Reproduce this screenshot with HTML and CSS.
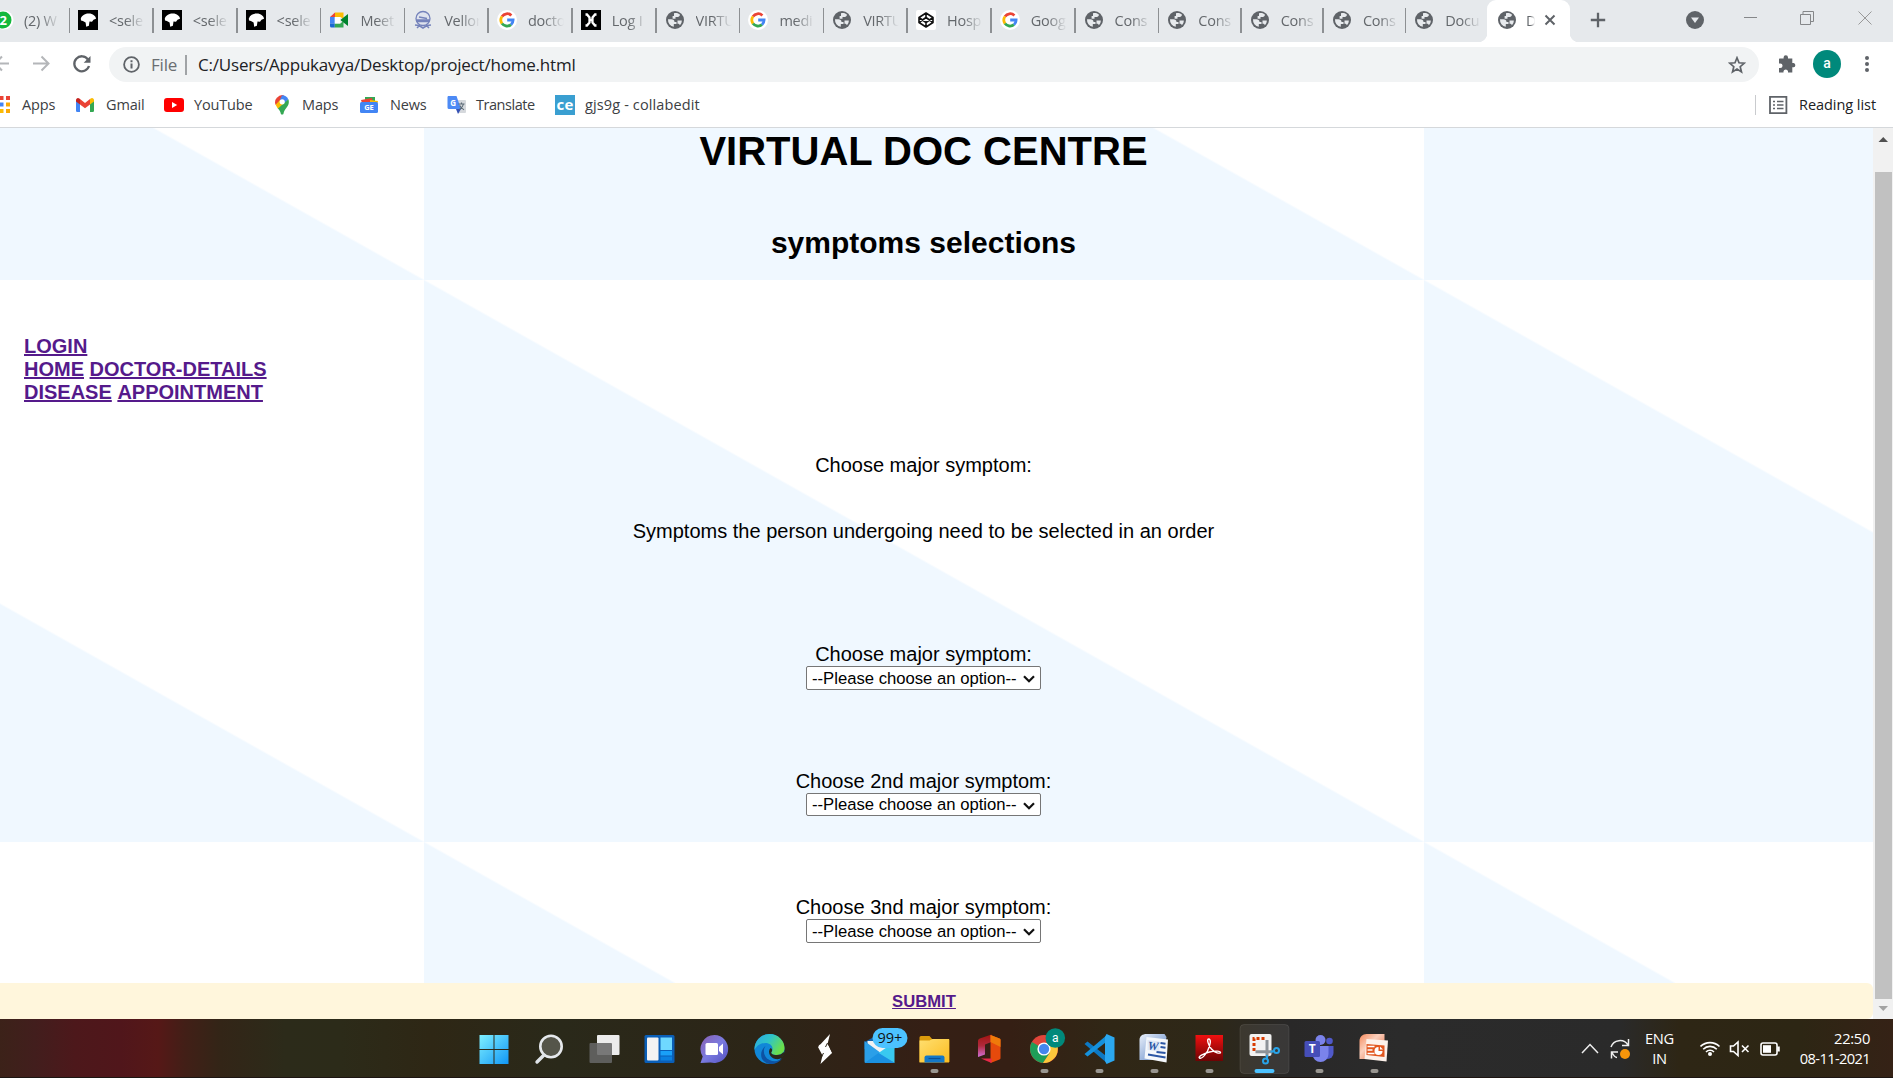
FILE: index.html
```html
<!DOCTYPE html>
<html lang="en">
<head>
<meta charset="utf-8">
<title>Document</title>
<link rel="stylesheet" href="styles.css">
</head>
<body>
<svg class="defs" aria-hidden="true">
  <defs>
    <linearGradient id="gwin" x1="0" y1="0" x2="1" y2="1"><stop offset="0" stop-color="#7ff0ff"/><stop offset="1" stop-color="#1096f5"/></linearGradient>
    <linearGradient id="gchat" x1="0" y1="0" x2="1" y2="1"><stop offset="0" stop-color="#8a5fb0"/><stop offset=".5" stop-color="#7a7be0"/><stop offset="1" stop-color="#5350c0"/></linearGradient>
    <linearGradient id="gedge" x1="0" y1="0" x2="1" y2="0.5"><stop offset="0" stop-color="#2ba6e4"/><stop offset=".5" stop-color="#2fc4c8"/><stop offset="1" stop-color="#6be04a"/></linearGradient>
    <linearGradient id="gfold" x1="0" y1="0" x2="1" y2="1"><stop offset="0" stop-color="#ffdf70"/><stop offset="1" stop-color="#fcbc20"/></linearGradient>
    <linearGradient id="goff" x1="0" y1="0" x2="0" y2="1"><stop offset="0" stop-color="#a3130f"/><stop offset=".5" stop-color="#b02a3c"/><stop offset="1" stop-color="#d070d8"/></linearGradient>
    <linearGradient id="gpdf" x1="0" y1="0" x2="0" y2="1"><stop offset="0" stop-color="#f01010"/><stop offset="1" stop-color="#6c0303"/></linearGradient>
    <linearGradient id="gword" x1="0" y1="0" x2="1" y2="1"><stop offset="0" stop-color="#e9f0fa"/><stop offset="1" stop-color="#5b83c4"/></linearGradient>
    <linearGradient id="gppt" x1="0" y1="0" x2="1" y2="1"><stop offset="0" stop-color="#f58a5c"/><stop offset=".4" stop-color="#fbd0bd"/><stop offset="1" stop-color="#e0592a"/></linearGradient>
    <symbol id="globe" viewBox="0 0 20 20">
      <circle cx="10" cy="10" r="9" fill="#5f6368"/>
      <path d="M3 9.300h3.300c2 0 3.200 1 3.200 2.700h2v2h-2.700v2.800A7 7 0 0 1 3 9.300z" fill="#e7eaed"/>
      <path d="M9 3.300c2.300-.7 4.500-.1 6 1.400-.2 1.600-1.400 2.300-3.200 2.300H10.500v1.700H7.600V6H9zM12.500 10.500h4.300c0 2-.7 3.500-2 4.700-.3-1-.9-1.400-2.300-1.400z" fill="#e7eaed"/>
    </symbol>
    <symbol id="google" viewBox="0 0 20 20">
      <circle cx="10" cy="10" r="10" fill="#fff"/>
      <g fill="none" stroke-width="2.800"><path d="M5 6.500A6.200 6.200 0 0 1 14.400 5.400" stroke="#ea4335"/><path d="M5 6.500A6.200 6.200 0 0 0 5 13.600" stroke="#fbbc05"/><path d="M5 13.500A6.200 6.200 0 0 0 14 14.600" stroke="#34a853"/><path d="M14 14.600A6.200 6.200 0 0 0 16.100 10H10.200" stroke="#4285f4"/></g>
    </symbol>
    <symbol id="bird" viewBox="0 0 20 20">
      <path d="M0 0h20v20H0z"/><path d="M2.800 8.500C4 5 7.500 3.500 10.500 3.500 14.500 3.300 18 6 18 8.800l-2.500.9-1.500 2-2.500-.2-.6 4.300-2.700 1-.6-4.300-2.700-1.400L3 10.500z" fill="#fff"/>
    </symbol>
  </defs>
</svg>

<div class="window">
  <header class="tabs">
    <div class="tab tab-cut"><svg class="fav" viewBox="0 0 20 20"><circle cx="10" cy="10" r="9.500" fill="#fff"/><circle cx="9" cy="10" r="8.500" fill="#12b83c"/><text x="9" y="14.500" class="unread">2</text></svg><span>(2) W</span></div>
    <div class="tab"><svg class="fav"><use href="#bird"/></svg><span>&lt;sele</span></div>
    <div class="tab"><svg class="fav"><use href="#bird"/></svg><span>&lt;sele</span></div>
    <div class="tab"><svg class="fav"><use href="#bird"/></svg><span>&lt;sele</span></div>
    <div class="tab"><svg class="fav" viewBox="0 0 20 20"><path d="M1 7l5-4.500V7z" fill="#ea4335"/><path d="M6 2.500h8.500V9l-3-2H6z" fill="#fbbc04"/><path d="M1 7h4.800v6.500H1z" fill="#4285f4"/><path d="M1 13.500h4.800v4H2.500A1.500 1.500 0 0 1 1 16z" fill="#1967d2"/><path d="M5.800 13.500h5.500l3.200-2.500v6.500H5.800z" fill="#34a853"/><path d="M11.300 10l7.700-6v12z" fill="#00832d"/><path d="M5.800 7h5.500v6.500H5.800z" fill="#fff"/></svg><span>Meet</span></div>
    <div class="tab"><svg class="fav" viewBox="0 0 20 20" fill="none" stroke="#7583bb"><circle cx="10" cy="8.500" r="7" fill="#dfe3ee" stroke-width="1.300"/><path d="M4 10h12v1.500H4zM6 7l8 1.500" fill="#5668ab" stroke-width="1.500"/><path d="M2 15l4 .5L10 18l4-2.500 4-.5M4 18l3-3 M16 18l-3-3" stroke-width="1.500"/></svg><span>Vellor</span></div>
    <div class="tab"><svg class="fav"><use href="#google"/></svg><span>docto</span></div>
    <div class="tab"><svg class="fav" viewBox="0 0 20 20"><path d="M0 0h20v20H0z"/><path d="M4.500 4.500h1.500l2.500 3v5l-2.500 3H4.500M15.500 4.500H14l-2.500 3v5l2.500 3h1.500M8 10h4" fill="none" stroke="#fff" stroke-width="2.300"/></svg><span>Log I</span></div>
    <div class="tab"><svg class="fav"><use href="#globe"/></svg><span>VIRTU</span></div>
    <div class="tab"><svg class="fav"><use href="#google"/></svg><span>medi</span></div>
    <div class="tab"><svg class="fav"><use href="#globe"/></svg><span>VIRTU</span></div>
    <div class="tab"><svg class="fav" viewBox="0 0 20 20"><rect width="20" height="20" rx="2" fill="#fff"/><path d="M10 3l7 4.500v5L10 17l-7-4.500v-5zM10 3v4.500M10 12.500V17M3 7.500l7 5 7-5M3 12.500l7-5 7 5" fill="none" stroke="#111" stroke-width="1.600" stroke-linejoin="round"/></svg><span>Hosp</span></div>
    <div class="tab"><svg class="fav"><use href="#google"/></svg><span>Goog</span></div>
    <div class="tab"><svg class="fav"><use href="#globe"/></svg><span>Cons</span></div>
    <div class="tab narrow"><svg class="fav"><use href="#globe"/></svg><span>Cons</span></div>
    <div class="tab narrow"><svg class="fav"><use href="#globe"/></svg><span>Cons</span></div>
    <div class="tab narrow"><svg class="fav"><use href="#globe"/></svg><span>Cons</span></div>
    <div class="tab narrow"><svg class="fav"><use href="#globe"/></svg><span>Docu</span></div>
    <div class="tab active"><svg class="fav"><use href="#globe"/></svg><span class="short">D</span><svg class="x" viewBox="0 0 12 12"><path d="M1.500 1.500l9 9M10.500 1.500l-9 9" stroke="#5f6368" stroke-width="2"/></svg></div>
    <svg class="newtab" viewBox="0 0 16 16"><path d="M8 .8v14.400M.8 8h14.400" stroke="#5f6368" stroke-width="2.300"/></svg>
    <div class="controls">
      <svg width="18" height="18" viewBox="0 0 18 18"><circle cx="9" cy="9" r="9" fill="#5f6368"/><path d="M5 6.500h8L9 12z" fill="#e7eaed"/></svg>
      <svg class="minimize" width="13" height="14" viewBox="0 0 13 14"><path d="M0 6.500h13" stroke="#858789"/></svg>
      <svg class="maximize" width="14" height="14" viewBox="0 0 14 14"><path d="M.5 3.500h10v10H.5zM3 3V.5h10.500v10H11" fill="none" stroke="#858789"/></svg>
      <svg class="close" width="14" height="14" viewBox="0 0 14 14"><path d="M.5.5l13 13M13.500.5l-13 13" stroke="#999"/></svg>
    </div>
  </header>

  <div class="toolbar">
    <svg class="nav-icons" width="109" height="43" viewBox="0 0 109 43" fill="none" stroke="#b4b6b9" stroke-width="2"><path d="M-6 21.500H9M2 14.500l-7 7 7 7M33 21.500h15M41.500 14.500l7 7-7 7"/><g stroke="#5f6368" stroke-width="2.300"><path d="M88 17.500A7.500 7.500 0 1 0 89 24"/><path d="M90.500 14v6.800h-6.800z" fill="#5f6368" stroke="none"/></g></svg>
    <div class="omnibox">
      <svg width="17" height="17" viewBox="0 0 17 17"><circle cx="8.500" cy="8.500" r="7.400" fill="none" stroke="#5f6368" stroke-width="1.800"/><path d="M8.500 4.200v2M8.500 7.500v5" stroke="#5f6368" stroke-width="2"/></svg>
      <span class="scheme">File</span><span class="rule"></span><span class="url">C:/Users/Appukavya/Desktop/project/home.html</span>
      <svg class="star" width="18" height="18" viewBox="0 0 18 18"><path d="M9 1.800l2 5 5.300.4-4.100 3.500 1.300 5.300L9 13.100l-4.500 2.900 1.300-5.300L1.700 7.200 7 6.800z" fill="none" stroke="#5f6368" stroke-width="1.700"/></svg>
    </div>
    <svg class="ext" width="18" height="18" viewBox="0 0 18 18"><path d="M1.500 3.500H5.600V2.400a2.200 2.200 0 0 1 4.400 0v1.100h4.300V8h1.300a2.200 2.200 0 0 1 0 4.300h-1.300V17.500H10v-1.300a2.300 2.300 0 0 0-4.500 0v1.300H1V13h1.300a2.200 2.200 0 0 0 0-4.500H1V4z" fill="#5f6368"/></svg>
    <div class="avatar">a</div>
    <svg class="dots" width="4" height="18" viewBox="0 0 4 18" fill="#5f6368"><circle cx="2" cy="3" r="2"/><circle cx="2" cy="9" r="2"/><circle cx="2" cy="15" r="2"/></svg>
  </div>

  <nav class="bookmarks">
    <a class="apps"><svg viewBox="0 0 20 20"><path d="M1 1h4v4H1z" fill="#ea4335"/><path d="M7.500 1h4v4h-4zM14 1h4v4h-4z" fill="#ea4335"/><path d="M7.500 7.500h4v4h-4z" fill="#4285f4"/><path d="M14 7.500h4v4h-4z" fill="#fbaa05"/><path d="M7.500 14h4v4h-4z" fill="#fbbc05"/><path d="M14 14h4v4h-4z" fill="#fbaa05"/></svg>Apps</a>
    <a><svg viewBox="0 0 20 20"><path d="M0 5h4v12H1.300A1.300 1.300 0 0 1 0 15.700z" fill="#4285f4"/><path d="M14 5h4v10.700a1.300 1.300 0 0 1-1.300 1.300H14z" fill="#34a853"/><path d="M0 5a2 2 0 0 1 3.300-1.500L4 4v5.500L0 6.500z" fill="#c5221f"/><path d="M4 4l5 4 5-4v5.500l-5 3.800-5-3.800z" fill="#ea4335"/><path d="M14 4l.7-.5A2 2 0 0 1 18 5v1.500l-4 3z" fill="#fbbc04"/></svg>Gmail</a>
    <a><svg viewBox="0 0 20 20"><rect y="3" width="20" height="14" rx="3" fill="#f00"/><path d="M8 7l5.200 3L8 13z" fill="#fff"/></svg>YouTube</a>
    <a class="maps"><svg viewBox="0 0 17 20"><path d="M2 2.700A7 7 0 0 1 9 .3L4.500 6z" fill="#ea4335"/><path d="M7 .2a7 7 0 0 1 6.300 4L9 9 4.500 5.500z" fill="#4285f4"/><path d="M2 2.600a7 7 0 0 0-1.300 7.500L6 5.200z" fill="#ea4335"/><path d="M.6 9.800L5 5l4.500 4-6.600 4.800z" fill="#fbbc04"/><path d="M13.400 4.200c1.200 3.800-.1 6.400-2.300 9-1.400 1.700-2.100 3-2.600 5.500-.3 1.200-2.300 1.200-2.700 0-.4-2-1.200-3.400-2.900-5.200z" fill="#34a853"/><circle cx="7.200" cy="6.800" r="2.600" fill="#fff"/></svg>Maps</a>
    <a><svg viewBox="0 0 20 20"><path d="M5 2h10v5H5z" fill="#34a853"/><path d="M1 5l11-2 1 5H2z" fill="#ea4335"/><path d="M10 5l8 1-1 4-7-1z" fill="#fbbc04"/><rect y="7" width="18" height="11" rx="1.500" fill="#4285f4"/><text x="9" y="15.300" class="gnews">GE</text></svg>News</a>
    <a class="translate"><svg viewBox="0 0 20 20"><path d="M8 5h10a1 1 0 0 1 1 1v11a1 1 0 0 1-1 1h-7z" fill="#d5d8dc"/><path d="M9 14h5l-3 5z" fill="#3551b5"/><path d="M1 1h8.500L14 14H2a1.500 1.500 0 0 1-1.500-1.500V2z" fill="#4d8af5"/><text x="6" y="10.500" class="gtr">G</text><path d="M11.500 9h6M14.500 7.500V9M16.500 9c-.5 2.500-2 4-4 5.500M12.800 10.500c1 2 2.300 3.200 4.200 4.300" fill="none" stroke="#5c6b76" stroke-width="1.100"/></svg>Translate</a>
    <a class="collab"><svg viewBox="0 0 20 20"><path d="M0 0h20v20H0z" fill="#3a9fd1"/><text x="10" y="14.500" class="ce">ce</text></svg>gjs9g - collabedit</a>
    <a class="reading"><svg viewBox="0 0 20 20" fill="none" stroke="#5f6368"><path d="M1.800 1.800h16.400v16.400H1.800z" stroke-width="1.800" transform="translate(-.8)"/><path d="M4 6.500h2M4 10h2M4 13.500h2M8 6.500h6.500M8 10h6.500M8 13.500h6.500" stroke-width="1.500"/></svg>Reading list</a>
  </nav>

  <div class="viewport">
    <main class="page">
      <h1>VIRTUAL DOC CENTRE</h1>
      <h2>symptoms selections</h2>
      <div class="links"><a href="#">LOGIN</a><br><a href="#">HOME</a> <a href="#">DOCTOR-DETAILS</a><br><a href="#">DISEASE</a> <a href="#">APPOINTMENT</a></div>
      <p class="intro">Choose major symptom:</p>
      <p class="note">Symptoms the person undergoing need to be selected in an order</p>
      <div class="field first"><label>Choose major symptom:</label><div class="pick"><select><option>--Please choose an option--</option></select><svg viewBox="0 0 12 8"><path d="M1 1.200l5 5 5-5" fill="none" stroke="#111" stroke-width="2.200"/></svg></div></div>
      <div class="field second"><label>Choose 2nd major symptom:</label><div class="pick"><select><option>--Please choose an option--</option></select><svg viewBox="0 0 12 8"><path d="M1 1.200l5 5 5-5" fill="none" stroke="#111" stroke-width="2.200"/></svg></div></div>
      <div class="field third"><label>Choose 3nd major symptom:</label><div class="pick"><select><option>--Please choose an option--</option></select><svg viewBox="0 0 12 8"><path d="M1 1.200l5 5 5-5" fill="none" stroke="#111" stroke-width="2.200"/></svg></div></div>
      <footer class="submit"><a href="#">SUBMIT</a></footer>
    </main>
    <div class="scrollbar"><svg viewBox="0 0 20 44"><path d="M5.500 14h9.500L10.250 9z" fill="#505050"/></svg><div class="thumb"></div><svg viewBox="0 0 20 20"><path d="M5.500 7h9.500l-4.750 5z" fill="#a3a3a3"/></svg></div>
  </div>

  <div class="taskbar">
    <div class="dock">
      <svg viewBox="-27.500 -30 55 59"><path d="M-15-14H-1V0H-15zM0-14H14V0H0zM-15 1H-1V15H-15zM0 1H14V15H0z" fill="url(#gwin)"/></svg>
      <svg viewBox="-27.500 -30 55 59"><circle cx="1.500" cy="-2.500" r="10.700" fill="#55554a" stroke="#e6e9ed" stroke-width="2.600"/><path d="M-5.500 6l-7 7" stroke="#dfe3e8" stroke-width="3.400" stroke-linecap="round"/></svg>
      <svg viewBox="-27.500 -30 55 59"><rect x="-7.500" y="-14" width="22.500" height="20" rx="1" fill="#ececec"/><rect x="-15" y="-6" width="22.500" height="20" rx="1" fill="#666" opacity=".87"/></svg>
      <svg viewBox="-27.500 -30 55 59"><rect x="-15" y="-14" width="30" height="28" rx="1.500" fill="#0a5fb8"/><rect x="-12.500" y="-11.500" width="11.500" height="23" rx="1" fill="#f3f3f3"/><path d="M1-11.500H12.500V1H1z" fill="#6fd8ff"/><path d="M1 2H12.500V6.500H1z" fill="#19a0f8"/><path d="M1 7.500H12.500V11.500H1z" fill="#0a80e0"/></svg>
      <svg viewBox="-27.500 -30 55 59"><path d="M0-14A14 14 0 1 1-4 13.500L-14 14l2.200-6.500A14 14 0 0 1 0-14z" fill="url(#gchat)"/><rect x="-9" y="-6" width="12.500" height="12" rx="1.500" fill="#fff"/><path d="M4.500-2L8.500-5.500V5.500L4.500 2z" fill="#fff"/></svg>
      <svg viewBox="-27.500 -30 55 59"><circle r="15" fill="#1187d8"/><path d="M-15-1C-14-10-7-15 0-15 9-15 15-8 15-1 15 4 11 6 7 6 3 6 1 4.500 2 3 5-2 1-6-4-6-9-6-13-3-15 1z" fill="url(#gedge)"/><path d="M-4-3C-7 1-6 8 0 11 5 13.500 10 12 13 9 10 13.500 5 15.500 0 15-8 14-12 4-4-3z" fill="#0d52a3"/><path d="M2 3C1 4.500 3 6 7 6c3 0 5-.6 7-3L15 5 12.500 9C9 11 4 10.500 1 7-1 4.500-1 1 1-1c2 1 2 2.500 1 4z" fill="#2a2819"/></svg>
      <svg viewBox="-27.500 -30 55 59"><path d="M5.500-15L3-5 7.500 4-4 15l2-8.500-4.500-8.500z" fill="#fff"/><path d="M1.500-5l2.500 2 3 7-5 3-4-7-4-4z" fill="#fff"/><path d="M3-6l-2 4M-3 8l2-4" stroke="#2c2518"/></svg>
      <svg viewBox="-27.500 -30 55 59"><path d="M-15-7L0-15 15-7V0H-15z" fill="#1464ac"/><path d="M-12-8H12V0L0 7-12-1z" fill="#f2f2f2"/><path d="M-15-8L15 14H-13.500A1.500 1.500 0 0 1-15 12.500z" fill="#2b9fe8"/><path d="M15-7V14L-1 4z" fill="#39c9f0"/><path d="M-15 14L-1 4 15 14z" fill="#1b91e2"/><rect x="-7" y="-21" width="35" height="20" rx="10" fill="#4cc2ff"/><text x="10.300" y="-5.700" class="count">99+</text></svg>
      <svg viewBox="-27.500 -30 55 59"><path d="M-15-11.500A1.500 1.500 0 0 1-13.500-13H-5l3 3.500H15V13H-15z" fill="#db9b0c"/><path d="M-15-8.500h10L-2-10H14.500V13.500H-15z" fill="url(#gfold)"/><path d="M-10 13.500V8.500A2 2 0 0 1-8 6.500H8A2 2 0 0 1 10 8.500V13.500z" fill="#1478c8"/><path d="M-6 9.500H6" stroke="#0b5096" stroke-width="1.200"/><rect x="-4" y="20" width="8" height="4" rx="2" fill="#999691"/></svg>
      <svg viewBox="-27.500 -30 55 59"><path d="M-11.500-8.500a3 3 0 0 1 1.800-2L2-14.500V-7l-6.500 2.500V5.500l-7 2.500z" fill="url(#goff)"/><path d="M1-14l9 3.500a1.500 1.500 0 0 1 1 1.500V9a1.500 1.500 0 0 1-1 1.500L1 14z" fill="#e64a0c"/><path d="M1-14l9 3.500a1.500 1.500 0 0 1 1 1.500v7L1-7z" fill="#ef7a0a"/><path d="M-8.500 9.500H2V14z" fill="#e8294a"/></svg>
      <svg viewBox="-27.500 -30 55 59"><circle cx="-.5" r="14" fill="#e0453a"/><path d="M-.5 0L-12.600-7A14 14 0 0 0-1.500 14L5.500 3.500z" fill="#1e9e58"/><path d="M-.5-3H13A14 14 0 0 1-1.500 14L5.500 3.500z" fill="#fcc73b"/><circle cx="-.5" r="6.600" fill="#fff"/><circle cx="-.5" r="5.200" fill="#4586ee"/><circle cx="10.800" cy="-11" r="9.800" fill="#00897b"/><text x="10.800" y="-7" class="who">a</text><rect x="-4" y="20" width="8" height="4" rx="2" fill="#999691"/></svg>
      <svg viewBox="-27.500 -30 55 59"><path d="M-15-5l3-2.500L8 8V14.500z" fill="#0d79c4"/><path d="M-15 5l3 2.500L8-8V-14.500z" fill="#1591dc"/><path d="M7-15l8 3.500V11.500L7 15 5.500 12V-12z" fill="#2ba8f0"/><rect x="-4" y="20" width="8" height="4" rx="2" fill="#999691"/></svg>
      <svg viewBox="-27.500 -30 55 59"><path d="M-15-9c0-4 3-6 7-6H10l2 3L8 11H-15z" fill="url(#gword)"/><path d="M-8-12L13.500-9.500 12 13.500-10 9.500z" fill="#f5f8fc"/><path d="M-7-9L5-7.500V2.500L-7 1z" fill="#dfe8f6"/><text x="-1.500" y="1" class="word" transform="rotate(5)">W</text><path d="M6-6l5 .7M6-2l5 .7M2 3L11 4M-6.500 5.500L11 8.500" stroke="#2b56a5" stroke-width="2"/><rect x="-4" y="20" width="8" height="4" rx="2" fill="#999691"/></svg>
      <svg viewBox="-27.500 -30 55 59"><path d="M-14-14H13.500V12H-14z" fill="url(#gpdf)"/><path d="M-1-10c3 0 2 6-1 12-3 5-6 8-8 7s4-4.500 10-6c6-1.500 11-1 11 .5S5 4 2 0C-1-3-3-10-1-10z" fill="none" stroke="#fff" stroke-width="1.400"/><rect x="-4" y="20" width="8" height="4" rx="2" fill="#999691"/></svg>
      <svg viewBox="-27.500 -30 55 59"><rect x="-24.500" y="-24.500" width="49" height="49" rx="4" fill="#fff" fill-opacity=".08" stroke="#fff" stroke-opacity=".09"/><rect x="-15" y="-15" width="22" height="22" rx="2" fill="#f2f2f2"/><path d="M-10.500 2V-10.500H1" fill="none" stroke="#d83b01" stroke-width="3" stroke-dasharray="3 2"/><path d="M2.500-9V8M-9 2.700H8" stroke="#8c9298" stroke-width="3"/><g fill="none" stroke="#28a3e8" stroke-width="2"><circle cx="1" cy="12" r="2.500"/><circle cx="12" cy="1.500" r="2.500"/><path d="M2.500 6v4M6 2.700l4-.7"/></g><rect x="-10" y="20" width="20" height="4" rx="2" fill="#4cc2ff"/></svg>
      <svg viewBox="-27.500 -30 55 59"><circle cx="10" cy="-8" r="3.300" fill="#5059c9"/><circle cx="1" cy="-9" r="5" fill="#7b83eb"/><path d="M5-3H14V4a6 6 0 0 1-6 6H5z" fill="#5059c9"/><path d="M-7-3H9V5A8 8 0 0 1-7 5z" fill="#7b83eb"/><rect x="-15" y="-8" width="15.500" height="16" rx="1.500" fill="#464eb8"/><text x="-7.300" y="4" class="tee">T</text><rect x="-4" y="20" width="8" height="4" rx="2" fill="#999691"/></svg>
      <svg viewBox="-27.500 -30 55 59"><path d="M-15-8c0-4 3-7 7-7H10V10H-15z" fill="url(#gppt)"/><path d="M-8-10L13.500-8.500 12 12.500-10 10z" fill="#fdf1ea"/><path d="M-8-5L10-3.500V8L-8 6z" fill="#e2571f"/><path d="M-7-2.500h7M-7 1h5M-7 4.500h7" stroke="#fff" stroke-width="1.600"/><circle cx="4" cy="2" r="4" fill="#fff"/><path d="M4 2V-3h5v5z" fill="#e2571f"/><path d="M5.500.5V-2.500L8.500.5z" fill="#fff"/><rect x="-4" y="20" width="8" height="4" rx="2" fill="#999691"/></svg>
    </div>
    <div class="tray">
      <svg width="52" height="59" viewBox="0 0 52 59" fill="none" stroke="#eee" stroke-width="1.500"><path d="M2 34l8-8.500 8 8.500"/><path d="M31 28a9.500 9.500 0 0 1 17-2M48.500 20v6.500H42M37 38.500c-2 0-3-1-5-5M31.500 39.500v-6.500H38"/><circle cx="45" cy="35" r="5" fill="#f7950a" stroke="none"/></svg>
      <div class="lang">ENG<br>IN</div>
      <svg class="status" width="82" height="59" viewBox="0 0 82 59" fill="none" stroke="#fff" stroke-width="1.600"><path d="M.5 27.500a13.500 13.500 0 0 1 19 0M3.200 30.200a9.600 9.600 0 0 1 13.600 0M6 33a5.600 5.600 0 0 1 8 0"/><circle cx="10" cy="35" r="2" fill="#fff" stroke="none"/><path d="M30.500 27h3l4.500-4v13.500l-4.500-4h-3zM42 26.500l6.500 6.500M48.500 26.500L42 33"/><rect x="61" y="24" width="16" height="12" rx="2"/><path d="M78.500 27.500v5" stroke-width="2.500"/><path d="M63 26.200h8v7.600h-8z" fill="#fff" stroke="none"/></svg>
      <div class="clock">22:50<br><span class="date">08-11-2021</span></div>
    </div>
  </div>
</div>
</body>
</html>
```

FILE: styles.css
```css
* { box-sizing: border-box; }
body { margin: 0; overflow: hidden; font-family: "Open Sans", "Noto Sans", sans-serif; }
.defs { position: absolute; width: 0; height: 0; }
.window { display: flex; flex-direction: column; width: 1893px; height: 1078px; background: #fff; overflow: hidden; }
svg { display: block; flex: none; }

/* tab strip */
.tabs { display: flex; height: 42px; background: #e6e9ec; font-size: 14.5px; letter-spacing: -.25px; color: #64686c; }
.tab { display: flex; align-items: center; flex: none; width: 83.800px; height: 40px; padding-left: 9.500px; position: relative; }
.narrow { width: 82.300px; }
.tab::before { content: ""; position: absolute; left: 0; top: 8px; width: 1.5px; height: 25px; background: #8d9093; }
.tab span { width: 36px; margin-left: 11px; overflow: hidden; white-space: nowrap; -webkit-mask-image: linear-gradient(90deg, #000 45%, transparent); mask-image: linear-gradient(90deg, #000 45%, transparent); }
.tab-cut { width: 68.500px; padding-left: 0; }
.tab-cut::before, .active::before { display: none; }
.tab-cut .fav { margin-left: -6px; }
.tab-cut span { margin-left: 10px; }
.fav { width: 20px; height: 20px; }
.active { width: 83px; height: 42px; padding: 0 0 2px 10px; background: #fff; border-radius: 9px 9px 0 0; }
.active::after { content: ""; position: absolute; left: -9px; right: -9px; bottom: 0; height: 9px; background: radial-gradient(circle at 0 0, transparent 9px, #fff 9.5px) left / 9px 9px no-repeat, radial-gradient(circle at 100% 0, transparent 9px, #fff 9.5px) right / 9px 9px no-repeat; }
.active .short { width: 9px; margin-left: 9px; }
.x { width: 12px; height: 12px; margin-left: 9px; }
.newtab { width: 16px; height: 16px; margin: 12px 0 0 19.500px; }
.controls { display: flex; align-items: flex-start; margin-left: auto; padding: 11px 21px 0 0; }
.controls svg:first-child { margin-right: 40px; }
.minimize { margin-right: 43px; }
.maximize { margin-right: 44px; }
.unread { font: bold 13px "Open Sans", sans-serif; fill: #fff; text-anchor: middle; }

/* address row */
.toolbar { display: flex; align-items: center; height: 43px; flex: none; }
.omnibox { display: flex; align-items: center; width: 1650px; height: 35px; margin-top: 2px; padding: 0 13px 0 14px; border-radius: 18px; background: #f1f3f4; font-size: 17px; letter-spacing: -.2px; color: #202124; }
.scheme { width: 34px; margin-left: 11px; color: #6a6e72; }
.rule { width: 2px; height: 20px; margin-right: 11px; background: #a0a3a6; }
.star { margin-left: auto; }
.ext { margin-left: 19px; }
.avatar { width: 28px; height: 28px; margin-left: 17px; border-radius: 50%; background: #00897b; color: #fff; font: 500 14px/26px Roboto, sans-serif; text-align: center; }
.dots { margin-left: 24px; }

/* bookmarks */
.bookmarks { display: grid; grid-template-columns: 76px 88px 111px 85px 87px 108px 1fr auto; align-items: center; height: 43px; flex: none; padding: 0 17px 3px 0; border-bottom: 1px solid #d5d8db; font-size: 14.5px; letter-spacing: -.15px; color: #3c4043; white-space: nowrap; }
.bookmarks a { display: flex; align-items: center; gap: 10px; }
.bookmarks svg { width: 20px; height: 20px; }
.bookmarks .apps { margin-left: -8px; }
.bookmarks .maps svg { width: 17px; }
.bookmarks .translate { gap: 9px; letter-spacing: -.45px; }
.bookmarks .collab { letter-spacing: .13px; }
.bookmarks .reading { height: 20px; padding-left: 13px; border-left: 1px solid #c9cbce; color: #202124; letter-spacing: -.05px; }
.gnews { font: bold 7.500px "Open Sans", sans-serif; fill: #fff; text-anchor: middle; }
.gtr { font: bold 8px "Open Sans", sans-serif; fill: #fff; text-anchor: middle; }
.ce { font: bold 15px "Open Sans", sans-serif; fill: #fff; text-anchor: middle; }

/* web page */
.viewport { display: flex; height: 891px; flex: none; }
.page { width: 1873px; background: linear-gradient(to bottom left, #fff 49.900%, #f0f8ff 50.100%) 424px 152px / 1000px 562px; font: 20px/23px "Liberation Sans", Arial, sans-serif; color: #000; text-align: center; }
.page h1, .page h2, .page p, .field { margin: 0; padding-right: 26px; }
.page h1 { font-size: 40px; line-height: 46px; }
.page h2 { margin-top: 52px; font-size: 30px; line-height: 34px; }
.page a { color: #551a8b; font-weight: bold; text-decoration: underline; }
.links { margin: 75px 0 0 24px; text-align: left; }
.page .intro { margin-top: 50px; }
.page .note { margin-top: 43px; }
.field { display: flex; flex-direction: column; align-items: center; }
.first { margin-top: 100px; }
.second { margin-top: 80px; }
.third { margin-top: 79px; }
.pick { position: relative; width: 235px; height: 24px; }
.second .pick { height: 23px; margin-bottom: 1px; }
.pick select { appearance: none; display: block; width: 100%; height: 100%; margin: 0; padding: 1px 0 0 5px; border: 1px solid #767676; border-radius: 2px; background: #fff; color: #000; font: 16.670px/20px "Liberation Sans", Arial, sans-serif; }
.second select { padding-top: 0; }
.pick svg { position: absolute; right: 6px; top: 9px; width: 12px; height: 8px; }
.submit { height: 36px; margin-top: 40px; padding: 7px 25px 0 0; background: #fff6dc; border-radius: 0 6px 6px 0; font-size: 16.670px; }
.scrollbar { display: flex; flex-direction: column; width: 20px; background: #f1f1f1; }
.thumb { flex: 1; margin: 0 1px 0 2px; background: #c1c1c1; }

/* taskbar */
.taskbar { display: flex; justify-content: space-between; height: 59px; flex: none; border-bottom: 1px solid #1d1512; background: linear-gradient(90deg, #3c2219 0, #421e1d 35px, #4d181b 75px, #50161b 120px, #561817 158px, #421f17 185px, #332517 220px, #2c2b1a 285px, #2c2b19 340px, #2e2715 430px, #2a291a 560px, #2c2517 760px, #351f15 930px, #351f14 1010px, #302716 1110px, #2e2818 1210px, #292828 1290px, #2b2b2b 1400px, #2a2a2a 1620px, #2e2615 1680px, #2d2614 1800px, #352216 1893px); color: #fff; }
.dock { display: flex; margin-left: 467px; }
.dock svg { width: 55px; height: 59px; overflow: visible; }
.tray { display: flex; padding-right: 23px; font-size: 14.700px; letter-spacing: -.3px; line-height: 20px; }
.lang { width: 55px; padding-top: 9px; text-align: center; }
.status { margin-left: 13px; }
.clock { width: 88px; padding-top: 9px; text-align: right; }
.date { letter-spacing: -.65px; }
.count { font: 14.500px "Open Sans", sans-serif; fill: #111; text-anchor: middle; }
.who { font: 12px Roboto, sans-serif; fill: #fff; text-anchor: middle; }
.word { font: italic bold 12px "Liberation Serif", serif; fill: #2b56a5; text-anchor: middle; }
.tee { font: bold 12px "Open Sans", sans-serif; fill: #fff; text-anchor: middle; }
```
